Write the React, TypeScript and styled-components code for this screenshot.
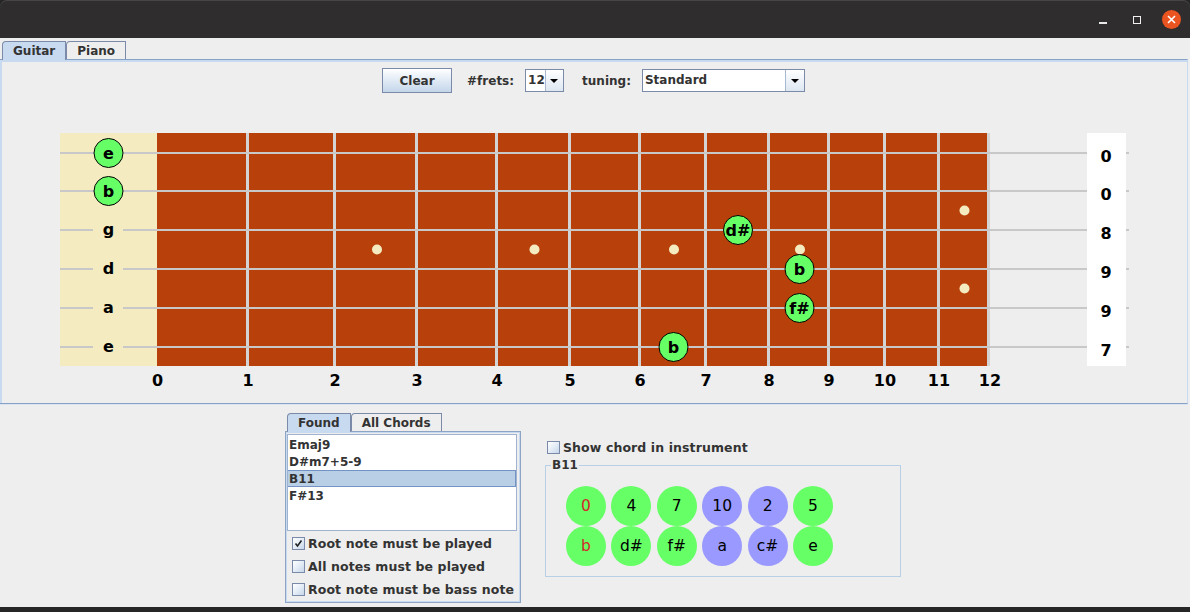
import React from 'react';
import styled, { createGlobalStyle } from 'styled-components';

const colors = {
  bg: '#eeeeee',
  text: '#333333',
  border: '#7a8aa8',
  tabSelected: '#c8daf0',
  lightBlue: '#b8cfe5',
  wood: '#b8400a',
  nut: '#f4ecc0',
  string: '#c8c8c8',
  fret: '#d4d4d4',
  green: '#66ff66',
  purple: '#9999ff',
  titleBar: '#2f2d2d',
};

const GlobalStyle = createGlobalStyle`
  html, body {
    margin: 0;
    padding: 0;
    background: #262626;
  }
  body {
    font-family: "DejaVu Sans", "Liberation Sans", sans-serif;
  }
  #root {
    width: 1190px;
    height: 612px;
    overflow: hidden;
  }
`;

const Window = styled.div`
  width: 1190px;
  height: 612px;
  display: flex;
  flex-direction: column;
  background: #262626;
  overflow: hidden;
`;

const TitleBar = styled.div`
  height: 38px;
  flex: none;
  box-sizing: border-box;
  padding-top: 1px;
  padding-right: 2px;
  background: ${colors.titleBar};
  border-radius: 7px 7px 0 0;
  box-shadow: inset 0 1px 0 #474545;
  display: flex;
  justify-content: flex-end;
  align-items: center;
`;

const ControlButton = styled.div`
  width: 34px;
  height: 36px;
  display: flex;
  align-items: center;
  justify-content: center;
`;

const MinimizeIcon = styled.span`
  width: 8px;
  height: 2px;
  margin-top: 6px;
  background: #e8e8e8;
`;

const MaximizeIcon = styled.span`
  width: 8px;
  height: 8px;
  box-sizing: border-box;
  border: 1px solid #f0f0f0;
`;

const CloseIcon = styled.span`
  width: 19px;
  height: 19px;
  border-radius: 50%;
  background: #e95420;
  display: flex;
  align-items: center;
  justify-content: center;
`;

const Body = styled.div`
  flex: 1;
  background: ${colors.bg};
  display: flex;
  flex-direction: column;
  color: ${colors.text};
  font-size: 12px;
  font-weight: bold;
`;

const TabStrip = styled.div<{ $inset: number }>`
  display: flex;
  align-items: flex-end;
  height: ${({ $inset }) => 18 + $inset}px;
  padding-left: 2px;
  position: relative;
  z-index: 1;
`;

const Tab = styled.div<{ $selected?: boolean }>`
  height: 18px;
  box-sizing: border-box;
  padding: 0 10px;
  display: flex;
  align-items: center;
  border: 1px solid ${colors.border};
  border-bottom: none;
  border-top-left-radius: 4px;
  background: ${({ $selected }) => ($selected ? colors.tabSelected : colors.bg)};
  font-size: 12px;
  font-weight: bold;
  color: ${colors.text};
  white-space: nowrap;
  ${({ $selected }) => ($selected ? 'height: 19px; margin-bottom: -1px;' : '')}
`;

const GuitarPanel = styled.div`
  height: 345px;
  flex: none;
  box-sizing: border-box;
  border-top: 1px solid #86a0c6;
  border-bottom: 1px solid #86a0c6;
  border-right: 1px solid ${colors.tabSelected};
  width: 1188px;
  box-shadow: inset 2px 2px 0 ${colors.tabSelected}, 0 1px 0 #dbe5f0;
  display: flex;
  flex-direction: column;
`;

const Toolbar = styled.div`
  margin-top: 8px;
  height: 25px;
  display: flex;
  justify-content: center;
  align-items: center;
`;

const PushButton = styled.div`
  width: 70px;
  height: 25px;
  box-sizing: border-box;
  border: 1px solid ${colors.border};
  background: linear-gradient(#ffffff 0%, #e6eef7 40%, #c4d6ea 100%);
  display: flex;
  align-items: center;
  justify-content: center;
`;

const ToolLabel = styled.span<{ $gap: number }>`
  margin-left: ${({ $gap }) => $gap}px;
  white-space: nowrap;
`;

const Combo = styled.div<{ $width: number }>`
  margin-left: 11px;
  width: ${({ $width }) => $width}px;
  height: 23px;
  box-sizing: border-box;
  border: 1px solid ${colors.border};
  background: #ffffff;
  display: flex;
  align-items: stretch;
`;

const ComboValue = styled.span`
  flex: 1;
  padding-left: 2px;
  display: flex;
  align-items: center;
  margin-top: -2px;
`;

const ComboArrow = styled.span`
  width: 18px;
  border-left: 1px solid #a8b8d0;
  background: linear-gradient(#ffffff, #dde7f2);
  display: flex;
  align-items: center;
  justify-content: center;

  &::after {
    content: '';
    border-left: 4px solid transparent;
    border-right: 4px solid transparent;
    border-top: 4px solid #000;
  }
`;

const Fretboard = styled.svg`
  display: block;
  margin-top: 7px;
`;

const NoteText = styled.text`
  font-family: "DejaVu Sans", sans-serif;
  font-weight: bold;
  font-size: 16px;
  fill: #000;
`;

const LowerArea = styled.div`
  flex: 1;
  display: flex;
  padding: 9px 0 0 285px;
`;

const ChordTabs = styled.div`
  width: 236px;
  display: flex;
  flex-direction: column;
`;

const TabContent = styled.div`
  height: 172px;
  box-sizing: border-box;
  border: 1px solid #8ea4c4;
  box-shadow: inset 1px 1px 0 ${colors.tabSelected}, inset -1px -1px 0 ${colors.tabSelected};
  padding: 2px 3px 0 1px;
  display: flex;
  flex-direction: column;
`;

const ChordList = styled.div`
  height: 97px;
  box-sizing: border-box;
  border: 1px solid #9fb3d0;
  background: #ffffff;
  padding-top: 1px;
`;

const ChordItem = styled.div<{ $selected?: boolean }>`
  height: 17px;
  box-sizing: border-box;
  padding-left: 1px;
  display: flex;
  align-items: center;
  background: ${({ $selected }) => ($selected ? colors.lightBlue : 'transparent')};
  border: 1px solid ${({ $selected }) => ($selected ? '#7393c4' : 'transparent')};
  border-left: none;
  border-right: ${({ $selected }) => ($selected ? '1px solid #7393c4' : 'none')};
`;

const Options = styled.div`
  padding-top: 1px;
  display: flex;
  flex-direction: column;
`;

const CheckRow = styled.div<{ $height: number; $indent: number }>`
  height: ${({ $height }) => $height}px;
  padding-left: ${({ $indent }) => $indent}px;
  display: flex;
  align-items: center;
  gap: 3px;
  font-size: 12.5px;
  letter-spacing: 0.1px;
  white-space: nowrap;
`;

const CheckBox = styled.span`
  width: 13px;
  height: 13px;
  flex: none;
  box-sizing: border-box;
  border: 1px solid ${colors.border};
  background: linear-gradient(135deg, #ffffff 0%, #e4ecf6 50%, #c6d6e9 100%);
  display: flex;
  align-items: center;
  justify-content: center;
`;

const ChordSide = styled.div`
  margin-left: 24px;
  padding-top: 24px;
  display: flex;
  flex-direction: column;
`;

const ChordFrame = styled.fieldset`
  margin: 0;
  width: 356px;
  box-sizing: border-box;
  border: 1px solid ${colors.lightBlue};
  padding: 13px 0 10px 5px;
  min-width: 0;
`;

const ChordTitle = styled.legend`
  padding: 0 1px;
  font-size: 12px;
  font-weight: bold;
  line-height: 16px;
  color: ${colors.text};
`;

const ToneGrid = styled.div`
  margin-left: 15px;
  display: grid;
  grid-template-columns: repeat(6, 40px);
  grid-auto-rows: 40px;
  column-gap: 5.4px;
`;

const Tone = styled.div<{ $color: string; $root?: boolean }>`
  border-radius: 50%;
  background: ${({ $color }) => $color};
  color: ${({ $root }) => ($root ? '#d42a2a' : '#000')};
  font-size: 15.5px;
  font-weight: normal;
  display: flex;
  align-items: center;
  justify-content: center;
`;

const Taskbar = styled.div`
  height: 5px;
  flex: none;
  background: #262626;
`;

const FRETS = [157, 247.5, 334.5, 416.5, 496.5, 569.5, 639.5, 705.5, 768.5, 828.5, 884.5, 938.5, 988.5];
const STRINGS = [153, 191, 230, 269, 308, 347];
const OPEN = ['e', 'b', 'g', 'd', 'a', 'e'];
const PLAYED = [0, 0, 8, 9, 9, 7];
const NOTES = ['e', 'b', 'd#', 'b', 'f#', 'b'];
const INLAYS = [3, 5, 7, 9];

const mid = (fret: number) => (FRETS[fret - 1] + FRETS[fret]) / 2;

const TONES = [
  { interval: '0', note: 'b', color: colors.green, root: true },
  { interval: '4', note: 'd#', color: colors.green },
  { interval: '7', note: 'f#', color: colors.green },
  { interval: '10', note: 'a', color: colors.purple },
  { interval: '2', note: 'c#', color: colors.purple },
  { interval: '5', note: 'e', color: colors.green },
];

const Check = () => (
  <svg width="9" height="9" viewBox="0 0 9 9">
    <path d="M1.5 4.5 L3.5 7 L7.5 1.5" fill="none" stroke="#222" strokeWidth="1.6" />
  </svg>
);

const GuitarNeck: React.FC = () => (
  <Fretboard width={1187} height={300} viewBox="0 100 1187 300">
    <rect x={60} y={133} width={97} height={233} fill={colors.nut} />
    <rect x={157} y={133} width={830} height={233} fill={colors.wood} />
    {FRETS.slice(1).map((x, i) => (
      <rect key={i} x={x - 1.5} y={133} width={3} height={233} fill={colors.fret} />
    ))}
    {INLAYS.map((f) => (
      <circle key={f} cx={mid(f) + 1.5} cy={249.5} r={5} fill={colors.nut} />
    ))}
    <circle cx={mid(12) + 1} cy={210.5} r={5} fill={colors.nut} />
    <circle cx={mid(12) + 1} cy={288.5} r={5} fill={colors.nut} />
    {STRINGS.map((y) => (
      <rect key={y} x={60} y={y - 1} width={1069} height={2} fill={colors.string} />
    ))}
    <rect x={1087} y={133} width={39} height={233} fill="#ffffff" />
    {STRINGS.map((y, i) => {
      const fret = PLAYED[i];
      const cx = fret === 0 ? 108.5 : mid(fret) + 1;
      return (
        <g key={i}>
          {fret !== 0 && (
            <>
              <rect x={93} y={y - 9} width={30} height={18} fill={colors.nut} />
              <NoteText x={108.5} y={y - 0.5} textAnchor="middle" dominantBaseline="central">
                {OPEN[i]}
              </NoteText>
            </>
          )}
          <circle cx={cx} cy={y} r={14.5} fill={colors.green} stroke="#000" strokeWidth={1} />
          <NoteText x={cx} y={y} textAnchor="middle" dominantBaseline="central">
            {NOTES[i]}
          </NoteText>
          <NoteText x={1106} y={y + 3} textAnchor="middle" dominantBaseline="central">
            {fret}
          </NoteText>
        </g>
      );
    })}
    {FRETS.map((x, i) => (
      <NoteText key={i} x={i === 12 ? x + 1.5 : x + 0.5} y={380} textAnchor="middle" dominantBaseline="central">
        {i}
      </NoteText>
    ))}
  </Fretboard>
);

export default function App() {
  return (
    <>
      <GlobalStyle />
      <Window>
        <TitleBar>
          <ControlButton>
            <MinimizeIcon />
          </ControlButton>
          <ControlButton>
            <MaximizeIcon />
          </ControlButton>
          <ControlButton>
            <CloseIcon>
              <svg width="9" height="9" viewBox="0 0 9 9">
                <path d="M1 1 L8 8 M8 1 L1 8" stroke="#fff" strokeWidth="1.6" />
              </svg>
            </CloseIcon>
          </ControlButton>
        </TitleBar>
        <Body>
          <TabStrip $inset={3}>
            <Tab $selected>Guitar</Tab>
            <Tab>Piano</Tab>
          </TabStrip>
          <GuitarPanel>
            <Toolbar>
              <PushButton>Clear</PushButton>
              <ToolLabel $gap={15}>#frets:</ToolLabel>
              <Combo $width={39}>
                <ComboValue>12</ComboValue>
                <ComboArrow />
              </Combo>
              <ToolLabel $gap={18}>tuning:</ToolLabel>
              <Combo $width={163}>
                <ComboValue>Standard</ComboValue>
                <ComboArrow />
              </Combo>
            </Toolbar>
            <GuitarNeck />
          </GuitarPanel>
          <LowerArea>
            <ChordTabs>
              <TabStrip $inset={0}>
                <Tab $selected>Found</Tab>
                <Tab>All Chords</Tab>
              </TabStrip>
              <TabContent>
                <ChordList>
                  <ChordItem>Emaj9</ChordItem>
                  <ChordItem>D#m7+5-9</ChordItem>
                  <ChordItem $selected>B11</ChordItem>
                  <ChordItem>F#13</ChordItem>
                </ChordList>
                <Options>
                  <CheckRow $height={23} $indent={5}>
                    <CheckBox>
                      <Check />
                    </CheckBox>
                    Root note must be played
                  </CheckRow>
                  <CheckRow $height={23} $indent={5}>
                    <CheckBox />
                    All notes must be played
                  </CheckRow>
                  <CheckRow $height={23} $indent={5}>
                    <CheckBox />
                    Root note must be bass note
                  </CheckRow>
                </Options>
              </TabContent>
            </ChordTabs>
            <ChordSide>
              <CheckRow $height={20} $indent={2}>
                <CheckBox />
                Show chord in instrument
              </CheckRow>
              <ChordFrame>
                <ChordTitle>B11</ChordTitle>
                <ToneGrid>
                  {TONES.map((t) => (
                    <Tone key={t.interval} $color={t.color} $root={t.root}>
                      {t.interval}
                    </Tone>
                  ))}
                  {TONES.map((t) => (
                    <Tone key={t.note + t.interval} $color={t.color} $root={t.root}>
                      {t.note}
                    </Tone>
                  ))}
                </ToneGrid>
              </ChordFrame>
            </ChordSide>
          </LowerArea>
        </Body>
        <Taskbar />
      </Window>
    </>
  );
}
